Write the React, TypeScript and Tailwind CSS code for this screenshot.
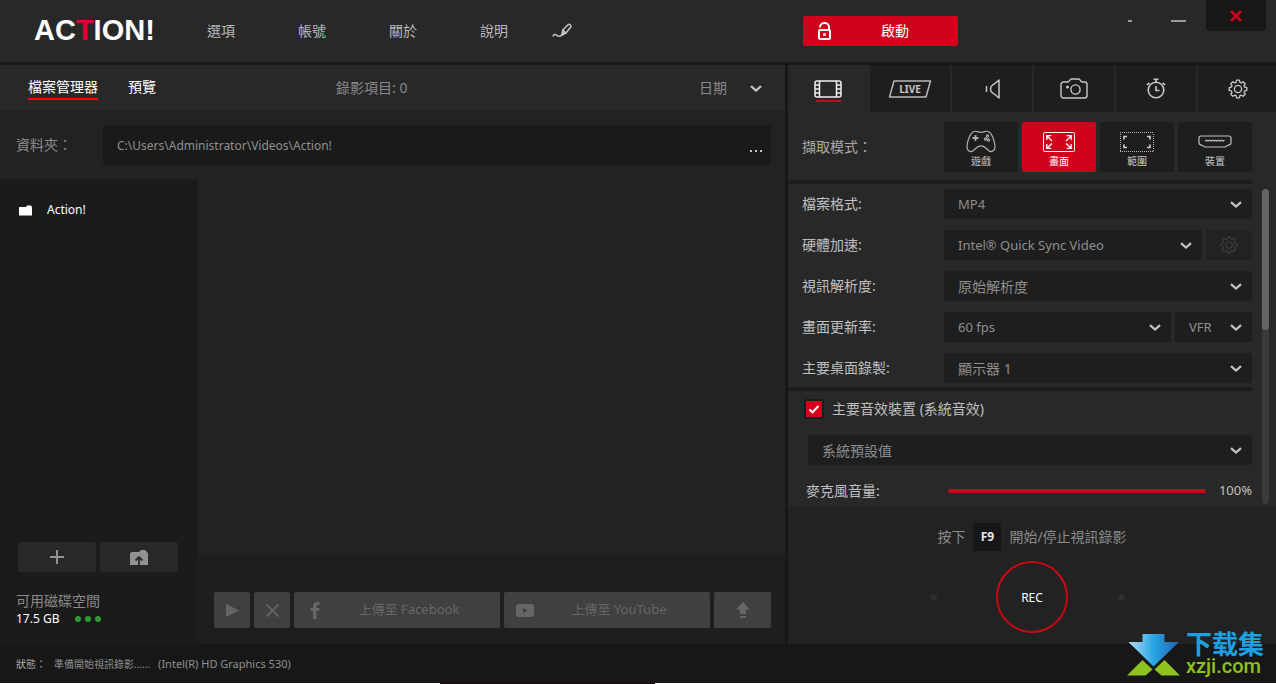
import { useId, useState } from "react";
import type { ReactNode } from "react";

const FONT = "font-['Noto_Sans','Noto_Sans_CJK_TC',sans-serif]";

function Chevron() {
  return (
    <svg width="12" height="8" viewBox="0 0 12 8" fill="none" stroke="#c4c4c4" strokeWidth="2.2">
      <path d="M1 1.2l5 4.4 5-4.4" />
    </svg>
  );
}

function GearIcon({ size = 20, color = "#c8c8c8" }: { size?: number; color?: string }) {
  return (
    <svg width={size} height={size} viewBox="0 0 20 20" fill="none" stroke={color} strokeWidth="1.3" strokeLinejoin="round">
      <path d="M8.6 1.2h2.8l.5 2.2 1.3.5 1.9-1.2 2.1 2.1-1.2 1.9.6 1.3 2.2.6v2.8l-2.2.5-.6 1.4 1.2 1.9-2.1 2.1-1.9-1.2-1.3.5-.5 2.2H8.6l-.5-2.2-1.3-.5-1.9 1.2-2.1-2.1L4 13.3l-.6-1.4-2.2-.5V8.6l2.2-.6L4 6.7 2.8 4.8l2.1-2.1 1.9 1.2 1.3-.5z" />
      <circle cx="10" cy="10" r="3.6" />
    </svg>
  );
}

type SelectProps = {
  options: string[];
  label?: string;
  id?: string;
  className?: string;
};

function Select({ options, label, id, className = "text-[13px]" }: SelectProps) {
  return (
    <div className={`relative h-[30px] ${className}`}>
      <select
        id={id}
        aria-label={label}
        className="h-full w-full appearance-none rounded-xs bg-[#1e1e1e] pl-[14px] pr-8 pt-px text-[#8e8e8e] outline-none"
      >
        {options.map((o) => (
          <option key={o}>{o}</option>
        ))}
      </select>
      <span className="pointer-events-none absolute inset-y-0 right-[10px] flex items-center pt-[2px]">
        <Chevron />
      </span>
    </div>
  );
}

function Field({ label, children }: { label: string; children: (id: string) => ReactNode }) {
  const id = useId();
  return (
    <div className="flex h-[30px] items-center">
      <label htmlFor={id} className="w-[142px] shrink-0 text-sm text-[#c0c0c0]">
        {label}
      </label>
      <div className="flex flex-1 gap-1">{children(id)}</div>
    </div>
  );
}

const menu = ["選項", "帳號", "關於", "說明"];

function Header() {
  return (
    <header className="flex h-[62px] bg-[#282828]">
      <div className="flex flex-1 items-center pl-[34px]">
        <h1 className="w-[173px] font-['Liberation_Sans',sans-serif] text-[29px] font-bold text-white">
          AC<span className="text-[#dc0032]">T</span>ION!
        </h1>
        <nav className="flex items-center gap-[63px]">
          {menu.map((m) => (
            <a key={m} href="#" className="text-sm text-[#b9b9b9]">
              {m}
            </a>
          ))}
        </nav>
        <button aria-label="draw" className="ml-11">
          <svg width="21" height="16" viewBox="0 0 21 16" fill="none" stroke="#c8c8c8" strokeWidth="1.4" strokeLinecap="round" strokeLinejoin="round">
            <path d="M1 13c1.200-1.800 2.500-2 3.700-.8s2.500 2.300 5.300-.2" />
            <path d="M9.800 12l1-5L16.300 1.600c1.200-1 3.400 1 2.400 2.400L14 10z" />
            <path d="M10.800 7l3.200 3M9.800 12l2.200-2.800" />
          </svg>
        </button>
      </div>
      <div className="flex w-[488px] items-start">
        <button className="ml-[15px] mt-4 flex h-[30px] w-[155px] items-center rounded-xs bg-[#d0021b] pl-[14px] text-sm text-white">
          <svg width="15" height="19" viewBox="0 0 15 19" fill="none" stroke="#fff" strokeWidth="2">
            <rect x="2" y="8" width="11" height="9" rx="1" />
            <path d="M3 5.500V5a4.500 4 0 0 1 9 0v3" />
            <circle cx="7.500" cy="12.500" r="1" strokeWidth="1.200" />
          </svg>
          <span className="flex-1 text-center">啟動</span>
        </button>
        <div className="ml-auto mr-[10px] flex">
          <button aria-label="tray" className="flex h-[42px] w-12 items-center justify-center">
            <span className="h-[2px] w-1 bg-[#9a9a9a]" />
          </button>
          <button aria-label="minimize" className="mr-1 flex h-[42px] w-12 items-center justify-center">
            <span className="h-[2px] w-[15px] bg-[#9a9a9a]" />
          </button>
          <button aria-label="close" className="flex h-[31px] w-[60px] items-center justify-center rounded-b bg-[#171717]">
            <svg width="12" height="12" viewBox="0 0 12 12" stroke="#d0021b" strokeWidth="2.800">
              <path d="M1 1l10 10M11 1L1 11" />
            </svg>
          </button>
        </div>
      </div>
    </header>
  );
}

function FileManager() {
  const pathId = useId();
  const uploadBtn = "flex h-9 items-center rounded-xs bg-[#404040] text-[#666]";
  return (
    <section className="flex min-w-0 flex-1 flex-col bg-[#222]">
      <div className="flex h-[46px] items-center bg-[#282828] pl-7 pr-[14px] text-sm">
        <div className="flex w-[308px] gap-[30px] text-white">
          <button className="h-6 border-b-2 border-[#f00] leading-[22px]">檔案管理器</button>
          <button className="h-6 border-b-2 border-transparent leading-[22px]">預覽</button>
        </div>
        <span className="text-[#8a8a8a]">錄影項目: 0</span>
        <div className="relative ml-auto flex h-[30px] w-[72px] items-center">
          <select aria-label="sort" className="w-full appearance-none bg-transparent text-sm text-[#8a8a8a] outline-none">
            <option>日期</option>
          </select>
          <span className="pointer-events-none absolute right-[9px] pt-[2px]">
            <Chevron />
          </span>
        </div>
      </div>

      <div className="flex h-[68px] items-center pl-4 pr-[14px]">
        <label htmlFor={pathId} className="w-[87px] text-sm text-[#8a8a8a]">
          資料夾：
        </label>
        <div className="flex h-10 flex-1 rounded-xs bg-[#1a1a1a]">
          <input
            id={pathId}
            defaultValue="C:\Users\Administrator\Videos\Action!"
            className="min-w-0 flex-1 bg-transparent pl-[14px] pt-px text-xs text-[#909090] outline-none"
          />
          <button aria-label="browse" className="flex items-center gap-[3px] px-[9px] pt-3">
            <i className="size-[2px] bg-[#c8c8c8]" />
            <i className="size-[2px] bg-[#c8c8c8]" />
            <i className="size-[2px] bg-[#c8c8c8]" />
          </button>
        </div>
      </div>

      <div className="flex flex-1">
        <aside className="flex w-[198px] flex-col bg-[#1b1b1b]">
          <button className="mt-[18px] flex h-[26px] items-center gap-[14px] pl-[19px] text-xs text-white">
            <svg width="14" height="11" viewBox="0 0 14 11" fill="#fff">
              <path d="M0 2h7l1-1.500h4l1 1.500v8a.5.5 0 0 1-.5.5H.5A.5.5 0 0 1 0 10z" />
            </svg>
            Action!
          </button>
          <div className="mt-auto flex gap-1 px-[18px]">
            <button aria-label="add folder" className="flex h-[30px] w-[78px] items-center justify-center rounded-xs bg-[#282828]">
              <svg width="14" height="14" viewBox="0 0 14 14" stroke="#929292" strokeWidth="2">
                <path d="M7 0v14M0 7h14" />
              </svg>
            </button>
            <button aria-label="export folder" className="flex h-[30px] w-[78px] items-center justify-center rounded-xs bg-[#282828]">
              <svg width="18" height="15" viewBox="0 0 18 15">
                <path d="M0 3.500L1.500 2H9l2-2h4l2 2 1 1.500V15H0z" fill="#929292" />
                <path d="M9 15V7.500M5.500 10.500L9 7l3.500 3.500" fill="none" stroke="#282828" strokeWidth="1.800" />
              </svg>
            </button>
          </div>
          <div className="h-[72px] pl-4 pt-[19px]">
            <p className="text-sm leading-5 text-[#8a8a8a]">可用磁碟空間</p>
            <p className="flex items-center text-xs leading-4 text-white">
              17.5 GB
              <span className="ml-4 flex gap-1">
                <i className="size-[6px] rounded-full bg-[#2f9a35]" />
                <i className="size-[6px] rounded-full bg-[#2f9a35]" />
                <i className="size-[6px] rounded-full bg-[#2f9a35]" />
              </span>
            </p>
          </div>
        </aside>

        <div className="flex flex-1 flex-col">
          <div className="flex-1" />
          <div className="flex h-[89px] gap-1 bg-[#1e1e1e] pl-4 pr-[14px] pt-[37px] text-[13px]">
            <button aria-label="play" className={`${uploadBtn} w-9 justify-center`}>
              <svg width="13" height="13" viewBox="0 0 13 13" fill="#666">
                <path d="M0 0l13 6.500L0 13z" />
              </svg>
            </button>
            <button aria-label="delete" className={`${uploadBtn} w-9 justify-center`}>
              <svg width="13" height="13" viewBox="0 0 13 13" stroke="#666" strokeWidth="1.700">
                <path d="M.5.5l12 12M12.5.5l-12 12" />
              </svg>
            </button>
            <button className={`${uploadBtn} flex-1 px-[9px]`}>
              <span className="flex w-6 justify-center">
                <svg width="10" height="17" viewBox="0 0 10 17" fill="#666">
                  <path d="M3 17V9H.5V6H3V4c0-2.600 1.500-4 4-4h2.500v3H8c-1 0-1.500.5-1.500 1.400V6h3L9 9H6.500v8z" />
                </svg>
              </span>
              <span className="flex-1 text-center">上傳至 Facebook</span>
            </button>
            <button className={`${uploadBtn} flex-1 px-[9px]`}>
              <span className="flex w-6 justify-center">
                <svg width="18" height="13" viewBox="0 0 18 13">
                  <rect width="18" height="13" rx="3" fill="#666" />
                  <path d="M7 4l4.500 2.500L7 9z" fill="#404040" />
                </svg>
              </span>
              <span className="flex-1 text-center">上傳至 YouTube</span>
            </button>
            <button aria-label="upload" className={`${uploadBtn} w-[57px] justify-center`}>
              <svg width="14" height="16" viewBox="0 0 14 16" fill="#666">
                <path d="M7 0l7 7.500h-4V12H4V7.500H0zM4 14h6v2H4z" />
              </svg>
            </button>
          </div>
        </div>
      </div>
    </section>
  );
}

const tabs: { name: string; icon: ReactNode }[] = [
  {
    name: "video",
    icon: (
      <svg width="28" height="18" viewBox="0 0 28 18" fill="none" stroke="#f0f0f0" strokeWidth="1.500">
        <rect x="1" y="1" width="26" height="16" rx="2" />
        <path d="M5.500 1v16M22.500 1v16M1 5h4.500M1 9h4.500M1 13h4.500M22.500 5H27M22.500 9H27M22.500 13H27" />
      </svg>
    ),
  },
  {
    name: "live",
    icon: (
      <svg width="44" height="18" viewBox="0 0 44 18">
        <path d="M6 1h36.500L38 17H1.500z" fill="none" stroke="#b8b8b8" strokeWidth="1.500" strokeLinejoin="round" />
        <text x="22" y="12.500" textAnchor="middle" fontSize="10" fontWeight="700" fill="#c8c8c8" fontFamily="Noto Sans">
          LIVE
        </text>
      </svg>
    ),
  },
  {
    name: "audio",
    icon: (
      <svg width="15" height="20" viewBox="0 0 15 20" fill="none" stroke="#c8c8c8" strokeWidth="1.500" strokeLinejoin="round">
        <path d="M1.500 7v6M14 1v18l-5-4.200c-1.500-1.200-3.500-1-3.500-4.800s2-3.600 3.500-4.800z" />
      </svg>
    ),
  },
  {
    name: "screenshot",
    icon: (
      <svg width="28" height="21" viewBox="0 0 28 21" fill="none" stroke="#c8c8c8" strokeWidth="1.400" strokeLinejoin="round">
        <path d="M3.500 4H8c1.500 0 1.500-3 3.500-3h7c2 0 2 3 3.500 3h2.500A2.500 2.500 0 0 1 27 6.500v11a2.500 2.500 0 0 1-2.500 2.500h-21A2.500 2.500 0 0 1 1 17.500v-11A2.500 2.500 0 0 1 3.500 4z" />
        <circle cx="15.500" cy="11.500" r="4.600" />
        <circle cx="7.500" cy="9" r=".8" fill="#c8c8c8" />
      </svg>
    ),
  },
  {
    name: "timer",
    icon: (
      <svg width="20" height="21" viewBox="0 0 20 21" fill="none" stroke="#c8c8c8" strokeWidth="1.600">
        <circle cx="10" cy="12" r="7.800" />
        <path d="M7.500 1.200h5M10 1v3M10 8v4.500h3.500M.8 7l2.600-2.200M19.200 7l-2.600-2.200" />
      </svg>
    ),
  },
  { name: "settings", icon: <GearIcon /> },
];

const modes: { name: string; icon: ReactNode }[] = [
  {
    name: "遊戲",
    icon: (
      <svg width="30" height="23" viewBox="0 0 30 23" fill="none" stroke="#b0b0b0" strokeWidth="1.200">
        <path d="M8 1.500c2-1 3.500.8 7 .8s5-1.800 7-.8c4 1.500 6.500 9 7 14.500.3 5-3.500 6.800-6.500 4.500-2.500-2-3.500-4.700-7.500-4.700S10 18.500 7.500 20.500c-3 2.300-6.800.5-6.500-4.500C1.500 10.500 4 3 8 1.500z" />
        <path d="M9.500 5v6M6.500 8h6" strokeWidth="1.800" />
        <circle cx="21.500" cy="6" r="1.100" />
        <circle cx="19.500" cy="9" r="1.100" />
        <circle cx="22.500" cy="10" r="1.100" />
      </svg>
    ),
  },
  {
    name: "畫面",
    icon: (
      <svg width="32" height="20" viewBox="0 0 32 20" fill="none" stroke="#fff">
        <rect x=".5" y=".5" width="31" height="19" rx="1" />
        <path d="M3.800 8V3.700h4.500M4 4l5 5M28.200 8V3.700h-4.500M28 4l-5 5M3.800 12v4.300h4.500M4 16l5-4.500M28.200 12v4.300h-4.500M28 16l-5-4.500" strokeWidth="1.300" />
      </svg>
    ),
  },
  {
    name: "範圍",
    icon: (
      <svg width="34" height="20" viewBox="0 0 34 20" fill="none" stroke="#b8b8b8">
        <path d="M0 .5h34M0 19.500h34M.5 2v17M33.500 2v17" strokeDasharray="1 1" />
        <path d="M4 7.500V4.500h3M30 7.500V4.500h-3M4 12.500v3h3M30 12.500v3h-3" stroke="#d0d0d0" strokeWidth="1.600" />
      </svg>
    ),
  },
  {
    name: "裝置",
    icon: (
      <svg width="34" height="13" viewBox="0 0 34 13" fill="none" stroke="#c0c0c0" strokeWidth="1.200">
        <path d="M3 1h28c1.500 0 2 .8 2 2v5c0 1.500-1.500 2-3 2.300L27 12H7l-3-1.700C2.500 10 1 9.500 1 8V3c0-1.200.5-2 2-2z" />
        <path d="M7 6l1.500-.8 1.500.8 1.500-.8 1.500.8 1.500-.8 1.500.8 1.500-.8 1.500.8 1.500-.8 1.500.8 1.500-.8 1.500.8 1.500-.8" />
      </svg>
    ),
  },
];

function Settings() {
  const [volume, setVolume] = useState(100);
  const [mode, setMode] = useState("畫面");
  const volumeId = useId();

  return (
    <section className="flex w-[488px] shrink-0 flex-col bg-[#282828]">
      <div className="flex h-[47px] gap-[2px] overflow-hidden">
        {tabs.map((t, i) => (
          <button
            key={t.name}
            aria-label={t.name}
            className={`flex w-20 shrink-0 flex-col items-center justify-center ${
              i === 0 ? "bg-[#282828] pt-1" : "bg-[#1e1e1e]"
            }`}
          >
            {t.icon}
            {i === 0 && <span className="mt-[2px] h-[2px] w-[25px] bg-[#d0021b]" />}
          </button>
        ))}
      </div>

      <div className="flex h-[68px] items-center pl-[14px] pr-6 pt-[2px]">
        <span className="w-[142px] text-sm text-[#a8a8a8]">擷取模式：</span>
        <div className="grid flex-1 grid-cols-4 gap-1">
          {modes.map((m) => (
            <button
              key={m.name}
              onClick={() => setMode(m.name)}
              className={`flex h-[50px] flex-col items-center rounded-xs pt-[7px] text-[10px] leading-[14px] ${
                m.name === mode ? "bg-[#d0021b] text-white" : "bg-[#1e1e1e] text-[#c8c8c8]"
              }`}
            >
              <span className="flex h-[25px] items-center">{m.icon}</span>
              {m.name}
            </button>
          ))}
        </div>
      </div>

      <div className="flex">
        <div className="flex-1">
          <div className="h-1 bg-[#1e1e1e]" />
          <div className="flex flex-col gap-[11px] pb-1 pl-[14px] pt-[5px]">
            <Field label="檔案格式:">{(id) => <Select id={id} options={["MP4", "AVI"]} className="flex-1 text-[13px]" />}</Field>
            <Field label="硬體加速:">
              {(id) => (
                <>
                  <Select id={id} options={["Intel® Quick Sync Video"]} className="flex-1 text-[13px]" />
                  <button aria-label="encoder settings" className="flex w-[46px] items-center justify-center rounded-xs bg-[#222]">
                    <GearIcon size={18} color="#3c3c3c" />
                  </button>
                </>
              )}
            </Field>
            <Field label="視訊解析度:">{(id) => <Select id={id} options={["原始解析度"]} className="flex-1 text-sm" />}</Field>
            <Field label="畫面更新率:">
              {(id) => (
                <>
                  <Select id={id} options={["60 fps", "30 fps"]} className="flex-1 text-[13px]" />
                  <Select label="frame rate mode" options={["VFR", "CFR"]} className="w-[77px] text-[13px]" />
                </>
              )}
            </Field>
            <Field label="主要桌面錄製:">{(id) => <Select id={id} options={["顯示器 1"]} className="flex-1 text-sm" />}</Field>
          </div>
          <div className="h-1 bg-[#1e1e1e]" />

          <label className="flex items-center gap-2 pl-4 pt-2 text-sm text-[#c0c0c0]">
            <span className="relative size-5">
              <input
                type="checkbox"
                defaultChecked
                className="peer block size-5 appearance-none rounded-xs border-2 border-[#1b1b1b] bg-[#1e1e1e] checked:bg-[#d0021b]"
              />
              <svg
                className="pointer-events-none absolute inset-0 hidden peer-checked:block"
                width="20"
                height="20"
                viewBox="0 0 20 20"
                fill="none"
                stroke="#fff"
                strokeWidth="2"
              >
                <path d="M5.500 10.500l3 2.800 6-6.300" />
              </svg>
            </span>
            主要音效裝置 (系統音效)
          </label>
          <Select label="audio device" options={["系統預設值"]} className="ml-5 mt-4 text-sm" />
          <div className="mt-[11px] flex h-[30px] items-center pl-[18px]">
            <label htmlFor={volumeId} className="w-[142px] text-sm text-[#c0c0c0]">
              麥克風音量:
            </label>
            <input
              id={volumeId}
              type="range"
              value={volume}
              onChange={(e) => setVolume(Number(e.target.value))}
              style={{ backgroundImage: `linear-gradient(to right, #d0021b ${volume}%, #1e1e1e ${volume}%)` }}
              className="h-1 min-w-0 flex-1 appearance-none rounded-full [&::-webkit-slider-thumb]:h-3 [&::-webkit-slider-thumb]:w-1 [&::-webkit-slider-thumb]:appearance-none"
            />
            <span className="w-[46px] text-right text-[13px] text-[#c0c0c0]">{volume}%</span>
          </div>
        </div>
        <div className="flex w-6 pb-[2px] pl-[10px] pt-[9px]">
          <div className="w-[7px] rounded-full bg-[#3a3a3a]">
            <div className="h-[141px] rounded-full bg-[#656565]" />
          </div>
        </div>
      </div>

      <div className="flex flex-1 flex-col items-center bg-[#222] pt-[17px]">
        <p className="flex items-center gap-2 text-sm text-[#8a8a8a]">
          按下
          <kbd className={`flex size-7 items-center justify-center rounded-xs bg-[#171717] text-xs font-bold text-[#e8e8e8] ${FONT}`}>F9</kbd>
          開始/停止視訊錄影
        </p>
        <div className="mt-[10px] flex items-center">
          <i className="mr-[59px] size-[7px] rounded-full bg-[#2e2e2e]" />
          <button className="size-[72px] rounded-full border-2 border-[#c80a10] pt-[2px] text-xs text-white">REC</button>
          <i className="ml-[50px] mr-[9px] size-[7px] rounded-full bg-[#2e2e2e]" />
        </div>
      </div>
    </section>
  );
}

function Watermark() {
  return (
    <div className="absolute bottom-2 right-3 flex items-end gap-[6px]">
      <svg width="53" height="43" viewBox="0 0 53 43">
        <defs>
          <linearGradient id="arrow" x1="0" y1="0" x2="1" y2="0">
            <stop offset="0" stopColor="#b5def5" />
            <stop offset=".5" stopColor="#27a5e2" />
            <stop offset="1" stopColor="#2560b0" />
          </linearGradient>
        </defs>
        <path d="M15.500 1h22v8H52L26.500 33.500 1.500 9h14z" fill="url(#arrow)" />
        <path d="M0 42.500L15.500 27l10 9.500-7 6zM53 42.500L37.500 27l-10 9.500 7 6z" fill="#8dc21f" />
      </svg>
      <div>
        <div className="font-['Noto_Sans_CJK_SC',sans-serif] text-[26px] font-bold leading-[26px] text-[#1e9fe0]">下载集</div>
        <div className="font-['Roboto',sans-serif] text-xl font-medium leading-5 text-[#8dc21f]">xzji.com</div>
      </div>
    </div>
  );
}

export default function App() {
  return (
    <div className={`flex min-h-screen flex-col bg-[#171717] ${FONT}`}>
      <Header />
      <main className="mt-[3px] flex flex-1 gap-[3px]">
        <FileManager />
        <Settings />
      </main>
      <footer className="relative">
        <div className="flex h-[39px] items-center pl-4 pt-[2px] text-[11px] text-[#909090]">
          <span className="w-[38px] text-[10px] text-[#b0b0b0]">狀態：</span>
          <span className="mr-2 text-[10px]">準備開始視訊錄影......</span>
          <span>(Intel(R) HD Graphics 530)</span>
        </div>
        <div className="flex h-px">
          <div className="w-[440px] bg-white" />
          <div className="w-[215px] bg-[#1c0c12]" />
          <div className="flex-1 bg-white" />
        </div>
        <Watermark />
      </footer>
    </div>
  );
}
